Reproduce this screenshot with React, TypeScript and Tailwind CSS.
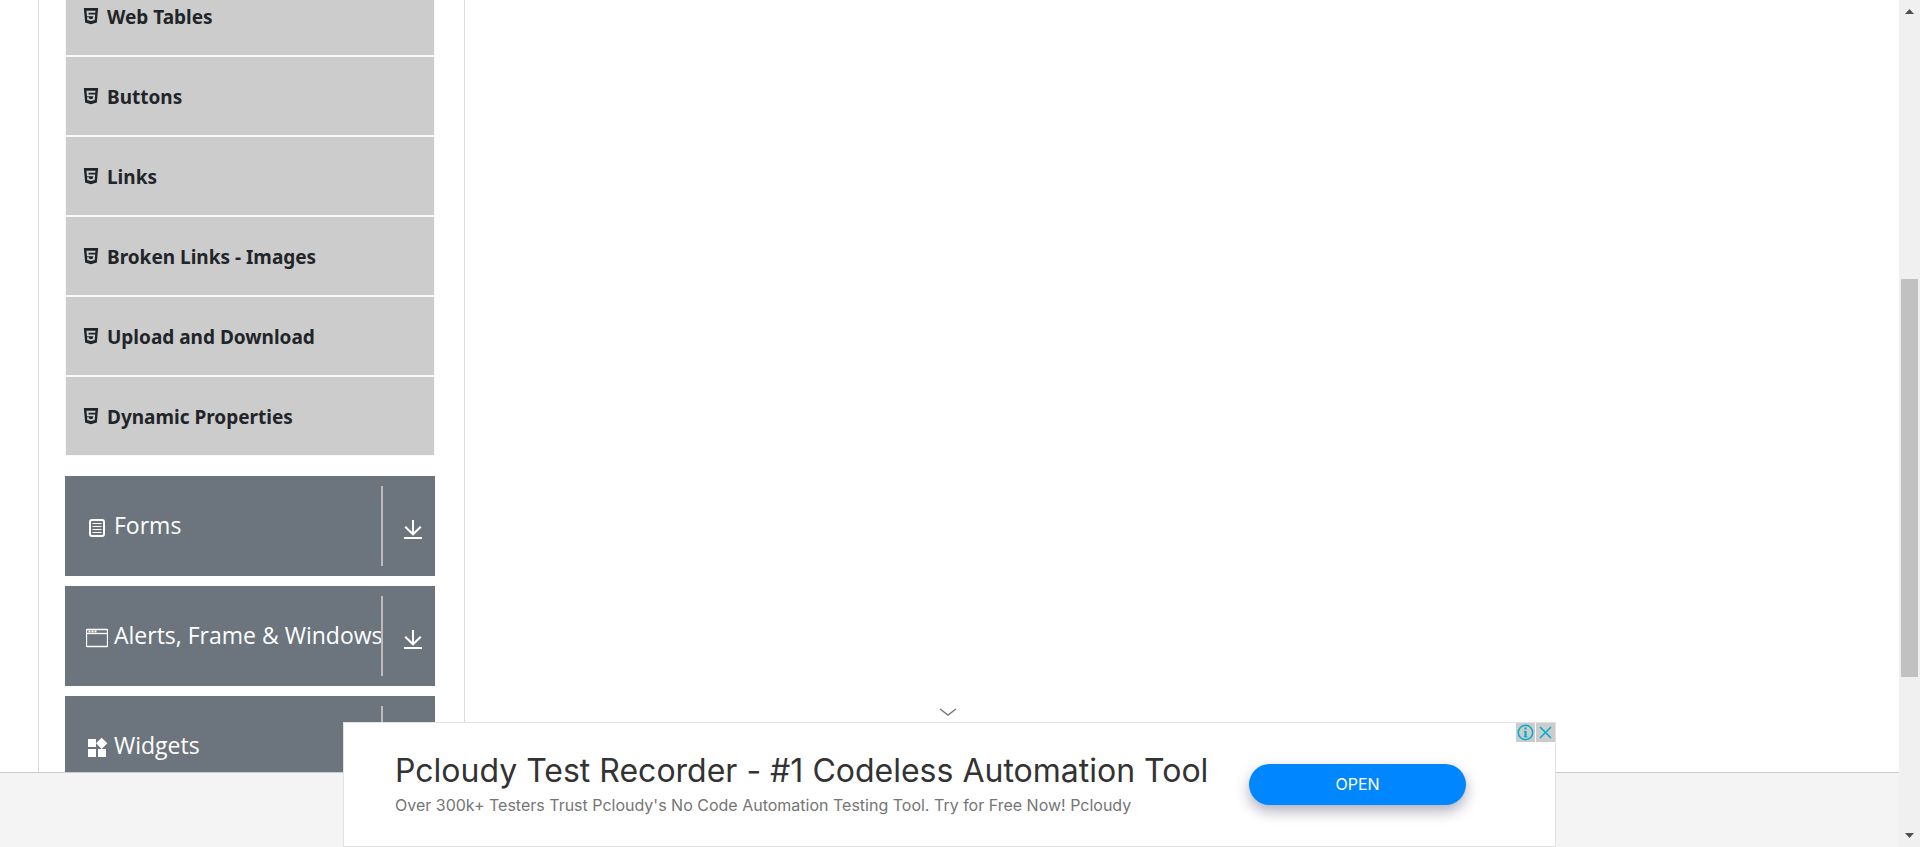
import type { ReactNode } from "react";
import { AiFillHtml5 } from "react-icons/ai";
import { MdWidgets } from "react-icons/md";

const elements = [
  "Web Tables",
  "Buttons",
  "Links",
  "Broken Links - Images",
  "Upload and Download",
  "Dynamic Properties",
];

function FormsIcon() {
  return (
    <svg viewBox="0 0 22 20" className="h-5 w-[22px]" fill="none" stroke="currentColor" aria-hidden="true">
      <rect x="4" y="2" width="14" height="16" rx="2" strokeWidth="2" />
      <path d="M6.5 5.5h9M6.5 8.5h9M6.5 11.5h9M6.5 14.5h9" strokeWidth="1" />
    </svg>
  );
}

function WindowIcon() {
  return (
    <svg viewBox="0 0 22 20" className="h-5 w-[22px]" fill="none" stroke="currentColor" aria-hidden="true">
      <rect x="0.5" y="1.5" width="21" height="17" rx="0.5" strokeWidth="1.3" />
      <path d="M1 5.5h20" strokeWidth="1.3" />
      <path d="M2.5 3.5h2M5.5 3.5h2M8.5 3.5h2" strokeWidth="1.8" />
    </svg>
  );
}

function ArrowDown() {
  return (
    <svg viewBox="0 0 18 20" className="h-5 w-[18px]" fill="none" stroke="currentColor" strokeWidth="2" aria-hidden="true">
      <path d="M9 0v14M1.2 6.7L9 14.3l7.8-7.6M0 18h18" />
    </svg>
  );
}

const groups: { label: string; icon: ReactNode }[] = [
  { label: "Forms", icon: <FormsIcon /> },
  { label: "Alerts, Frame & Windows", icon: <WindowIcon /> },
  { label: "Widgets", icon: <MdWidgets className="h-6 w-6 shrink-0" /> },
];

function Sidebar() {
  return (
    <aside className="ml-[38px] w-[427px] shrink-0 border-x border-[#dcdcdc] pl-[26px] pr-[29px]">
      <ul className="-mt-6">
        {elements.map((name) => (
          <li key={name} className="h-20 border border-[#f8f9fa] bg-[#ccc]">
            <a href="#" className="flex h-full items-center gap-1.5 pl-[15px] text-[#212529]">
              <AiFillHtml5 className="h-5 w-5" />
              <span className="pt-0.5 text-[19px] font-bold">{name}</span>
            </a>
          </li>
        ))}
      </ul>
      <div className="mt-5 flex flex-col gap-2.5">
        {groups.map((group) => (
          <button
            key={group.label}
            type="button"
            className="flex h-[100px] items-center bg-[#6c757d] py-2.5 pl-[21px] text-left text-white"
          >
            <span className="flex w-[295px] shrink-0 items-center gap-1.5 whitespace-nowrap pb-0.5 font-['Open_Sans',sans-serif] text-[23px]">
              <span className="flex w-[22px] shrink-0 justify-center pt-1.5">{group.icon}</span>
              {group.label}
            </span>
            <span className="flex h-20 flex-1 items-center justify-end border-l-2 border-[#bbb] pr-[13px] pt-2">
              <ArrowDown />
            </span>
          </button>
        ))}
      </div>
    </aside>
  );
}

function Banner() {
  return (
    <section className="fixed bottom-0 left-[343px] right-[364px] flex h-[125px] items-center border border-[#e2e2e2] bg-white pl-[51px] font-[Inter,sans-serif]">
      <button type="button" aria-label="Collapse" className="absolute -top-4 left-[595px]">
        <svg viewBox="0 0 18 10" className="h-2.5 w-[18px]" fill="none" stroke="#757575" strokeWidth="1.4" aria-hidden="true">
          <path d="M1 2l8 6 8-6" />
        </svg>
      </button>
      <div className="w-[854px] shrink-0 whitespace-nowrap">
        <h2 className="text-[32px] leading-10 text-[#333]">
          Pcloudy Test Recorder - #1 Codeless Automation Tool
        </h2>
        <p className="text-base leading-7 text-[#757575]">
          Over 300k+ Testers Trust Pcloudy's No Code Automation Testing Tool. Try for Free Now! Pcloudy
        </p>
      </div>
      <a
        href="#"
        className="flex h-[41px] w-[217px] items-center justify-center rounded-full bg-[#0087ff] pb-px text-base text-white shadow-[0_6px_14px_rgba(20,20,60,0.35)]"
      >
        OPEN
      </a>
      <div className="absolute right-0 top-0 flex gap-px text-[#00aecd]">
        <button type="button" aria-label="Ad information" className="bg-[#ccc]">
          <svg viewBox="0 0 19 19" className="h-[19px] w-[19px]" fill="none" stroke="currentColor" aria-hidden="true">
            <circle cx="9.5" cy="9.5" r="7.2" strokeWidth="1.5" />
            <path d="M9.5 8v6M9.5 4.5v2" strokeWidth="2.2" />
            <path d="M7.8 8.4h2M7.8 13.8h3.6" strokeWidth="1" />
          </svg>
        </button>
        <button type="button" aria-label="Close ad" className="bg-[#ccc]">
          <svg viewBox="0 0 19 19" className="h-[19px] w-[19px]" fill="none" stroke="currentColor" strokeWidth="1.6" aria-hidden="true">
            <path d="M4 4l11 11M15 4L4 15" />
          </svg>
        </button>
      </div>
    </section>
  );
}

function ScrollTrack() {
  return (
    <div className="flex w-[21px] shrink-0 flex-col items-center bg-[#f0f0f0]" aria-hidden="true">
      <svg viewBox="0 0 9 5" className="mt-[9px] h-[5px] w-[9px]" fill="#505050">
        <path d="M0 5L4.5 0L9 5z" />
      </svg>
      <div className="mt-[9px] flex min-h-0 w-full flex-1 flex-col items-center">
        <div className="flex-[256]" />
        <div className="w-[17px] flex-[398] bg-[#c1c1c1]" />
        <div className="flex-[147]" />
      </div>
      <svg viewBox="0 0 9 5" className="mb-[9px] mt-[9px] h-[5px] w-[9px]" fill="#505050">
        <path d="M0 0h9L4.5 5z" />
      </svg>
    </div>
  );
}

export default function App() {
  return (
    <div className="flex h-screen overflow-hidden bg-white font-['Noto_Sans',sans-serif]">
      <div className="flex min-w-0 flex-1 flex-col">
        <main className="flex min-h-0 flex-1 overflow-hidden">
          <Sidebar />
        </main>
        <footer className="h-[75px] shrink-0 border-t border-[#ccc] bg-[#f4f4f4]" />
        <Banner />
      </div>
      <ScrollTrack />
    </div>
  );
}
